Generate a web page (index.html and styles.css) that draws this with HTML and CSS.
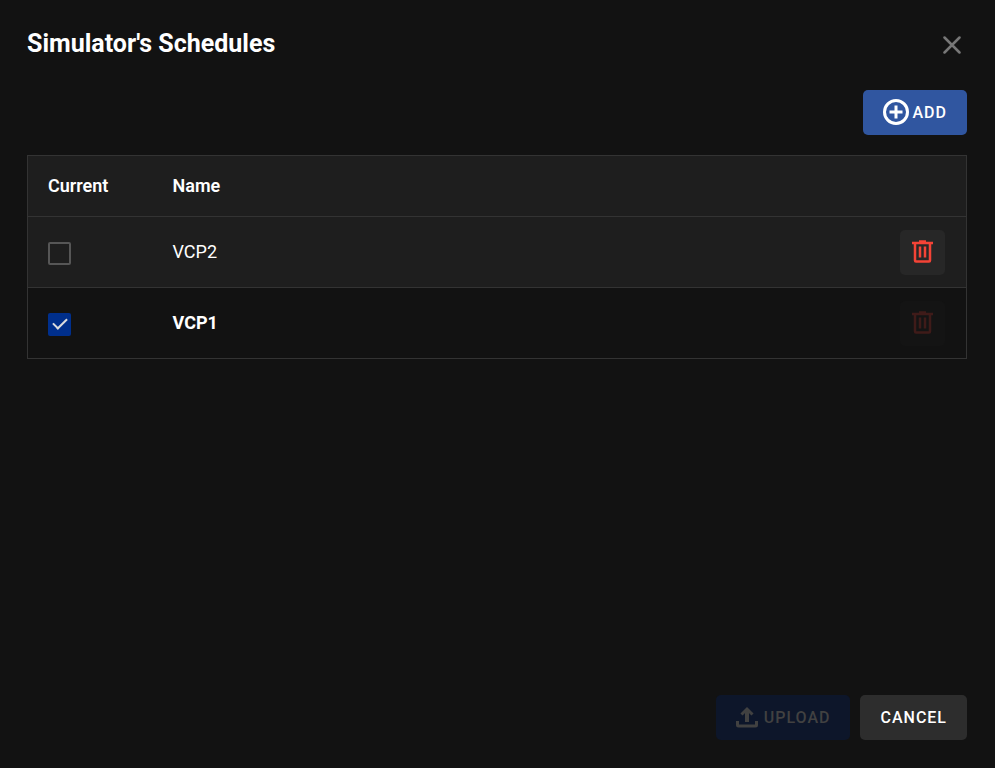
FILE: index.html
```html
<!DOCTYPE html>
<html lang="en">
<head>
<meta charset="UTF-8" />
<meta name="viewport" content="width=device-width, initial-scale=1.0" />
<title>Simulator's Schedules</title>
<link rel="stylesheet" href="styles.css">
</head>
<body>
<div class="dialog">
    <header class="dialog-header">
        <h2>Simulator's Schedules</h2>
        <button type="button" class="close" aria-label="Close">
            <svg width="18" height="18" viewBox="0 0 18 18"><path d="M1.500 1.500l15 15M16.500 1.500l-15 15" /></svg>
        </button>
    </header>
    <div class="toolbar">
        <button type="button" class="btn btn-add">
            <svg width="26" height="26" viewBox="0 0 26 26"><circle cx="13" cy="13" r="11.500" /><path d="M13 6.500v13M6.500 13h13" /></svg>
            ADD
        </button>
    </div>
    <table>
        <thead>
        <tr>
            <th class="col-current">Current</th>
            <th>Name</th>
            <th class="col-action"></th>
        </tr>
        </thead>
        <tbody>
        <tr>
            <td><input type="checkbox" aria-label="VCP2" /></td>
            <td>VCP2</td>
            <td class="col-action">
                <button type="button" class="btn-delete" aria-label="Delete VCP2">
                    <svg width="21" height="23" viewBox="0 0 21 23"><path d="M0 3h21M7 1.500h7M3 3v17.500q0 1 1 1h13q1 0 1-1V3M8 6.500v11M13 6.500v11" /></svg>
                </button>
            </td>
        </tr>
        <tr class="active">
            <td><input type="checkbox" aria-label="VCP1" checked /></td>
            <td>VCP1</td>
            <td class="col-action">
                <button type="button" class="btn-delete" aria-label="Delete VCP1" disabled>
                    <svg width="21" height="23" viewBox="0 0 21 23"><path d="M0 3h21M7 1.500h7M3 3v17.500q0 1 1 1h13q1 0 1-1V3M8 6.500v11M13 6.500v11" /></svg>
                </button>
            </td>
        </tr>
        </tbody>
    </table>
    <footer class="dialog-footer">
        <button type="button" class="btn btn-upload" disabled>
            <svg width="22" height="22" viewBox="0 0 22 22"><path d="M11 16V3" class="stem" /><path d="M5.500 8.500L11 3 16.500 8.500M1.500 15v4q0 1 1 1h17q1 0 1-1v-4" /></svg>
            UPLOAD
        </button>
        <button type="button" class="btn btn-cancel">CANCEL</button>
    </footer>
</div>
</body>
</html>
```
FILE: styles.css
```css
* {
    box-sizing: border-box;
}

body {
    margin: 0;
    background-color: #121212;
    color: #fff;
    font-family: Roboto, sans-serif;
    font-size: 18px;
}

.dialog {
    display: flex;
    flex-direction: column;
    min-height: 100vh;
    padding: 28px;
    padding-left: 27px;
}

.dialog-header {
    display: flex;
    justify-content: space-between;
    align-items: flex-end;
    height: 32px;
}

h2 {
    margin: 0;
    font-size: 25px;
    font-weight: 700;
    line-height: 32px;
}

button {
    border: none;
    border-radius: 5px;
    font-family: inherit;
    cursor: pointer;
}

button:disabled {
    cursor: default;
}

svg {
    fill: none;
    stroke: currentColor;
    flex-shrink: 0;
}

.close {
    display: flex;
    padding: 6px;
    background: none;
    color: #777;
}

.close svg {
    stroke-width: 2.5;
    stroke-linecap: round;
}

.toolbar,
.dialog-footer {
    display: flex;
    justify-content: flex-end;
    gap: 10px;
}

.toolbar {
    margin: 30px 0 20px;
}

.dialog-footer {
    margin-top: auto;
}

.btn {
    display: flex;
    align-items: center;
    height: 45px;
    padding: 0 20px 1px;
    font-size: 16px;
    font-weight: 500;
    letter-spacing: 1px;
    color: #fff;
}

.btn-add {
    gap: 4px;
    background-color: #3056a0;
}

.btn-add svg {
    stroke-width: 3;
}

.btn-upload {
    gap: 6px;
    background-color: #0d162a;
    color: #414141;
}

.btn-upload svg {
    stroke-width: 3;
}

.btn-upload .stem {
    stroke-width: 4;
}

.btn-cancel {
    background-color: #2d2d2d;
}

table {
    width: 100%;
    table-layout: fixed;
    border-collapse: collapse;
    border: 1px solid #333;
    background-color: #1e1e1e;
}

tr {
    height: 71px;
    border-bottom: 1px solid #333;
}

thead tr {
    height: 61px;
}

th, td {
    padding: 0 20px 2px;
    text-align: left;
}

th {
    font-weight: 600;
}

.active {
    background-color: #121212;
    font-weight: 700;
}

.col-current {
    width: 125px;
}

.col-action {
    width: 87px;
    padding-bottom: 0;
}

input[type="checkbox"] {
    display: block;
    appearance: none;
    width: 23px;
    height: 23px;
    margin: 4px 0 0;
    border: 2px solid #565656;
    border-radius: 2px;
}

input[type="checkbox"]:checked {
    border-color: #002f8c;
    background-color: #002f8c;
}

input[type="checkbox"]:checked::before {
    content: "";
    display: block;
    width: 6px;
    height: 12px;
    margin: 0 0 0 6px;
    border: solid #ddd;
    border-width: 0 2px 2px 0;
    transform: rotate(45deg);
}

.btn-delete {
    display: flex;
    justify-content: center;
    align-items: center;
    width: 45px;
    height: 45px;
    padding: 0 0 1px;
    background-color: #272727;
    color: #f44336;
}

.btn-delete svg {
    stroke-width: 2.5;
}

.btn-delete:disabled {
    background-color: #141414;
    color: #3f1b19;
}
```
